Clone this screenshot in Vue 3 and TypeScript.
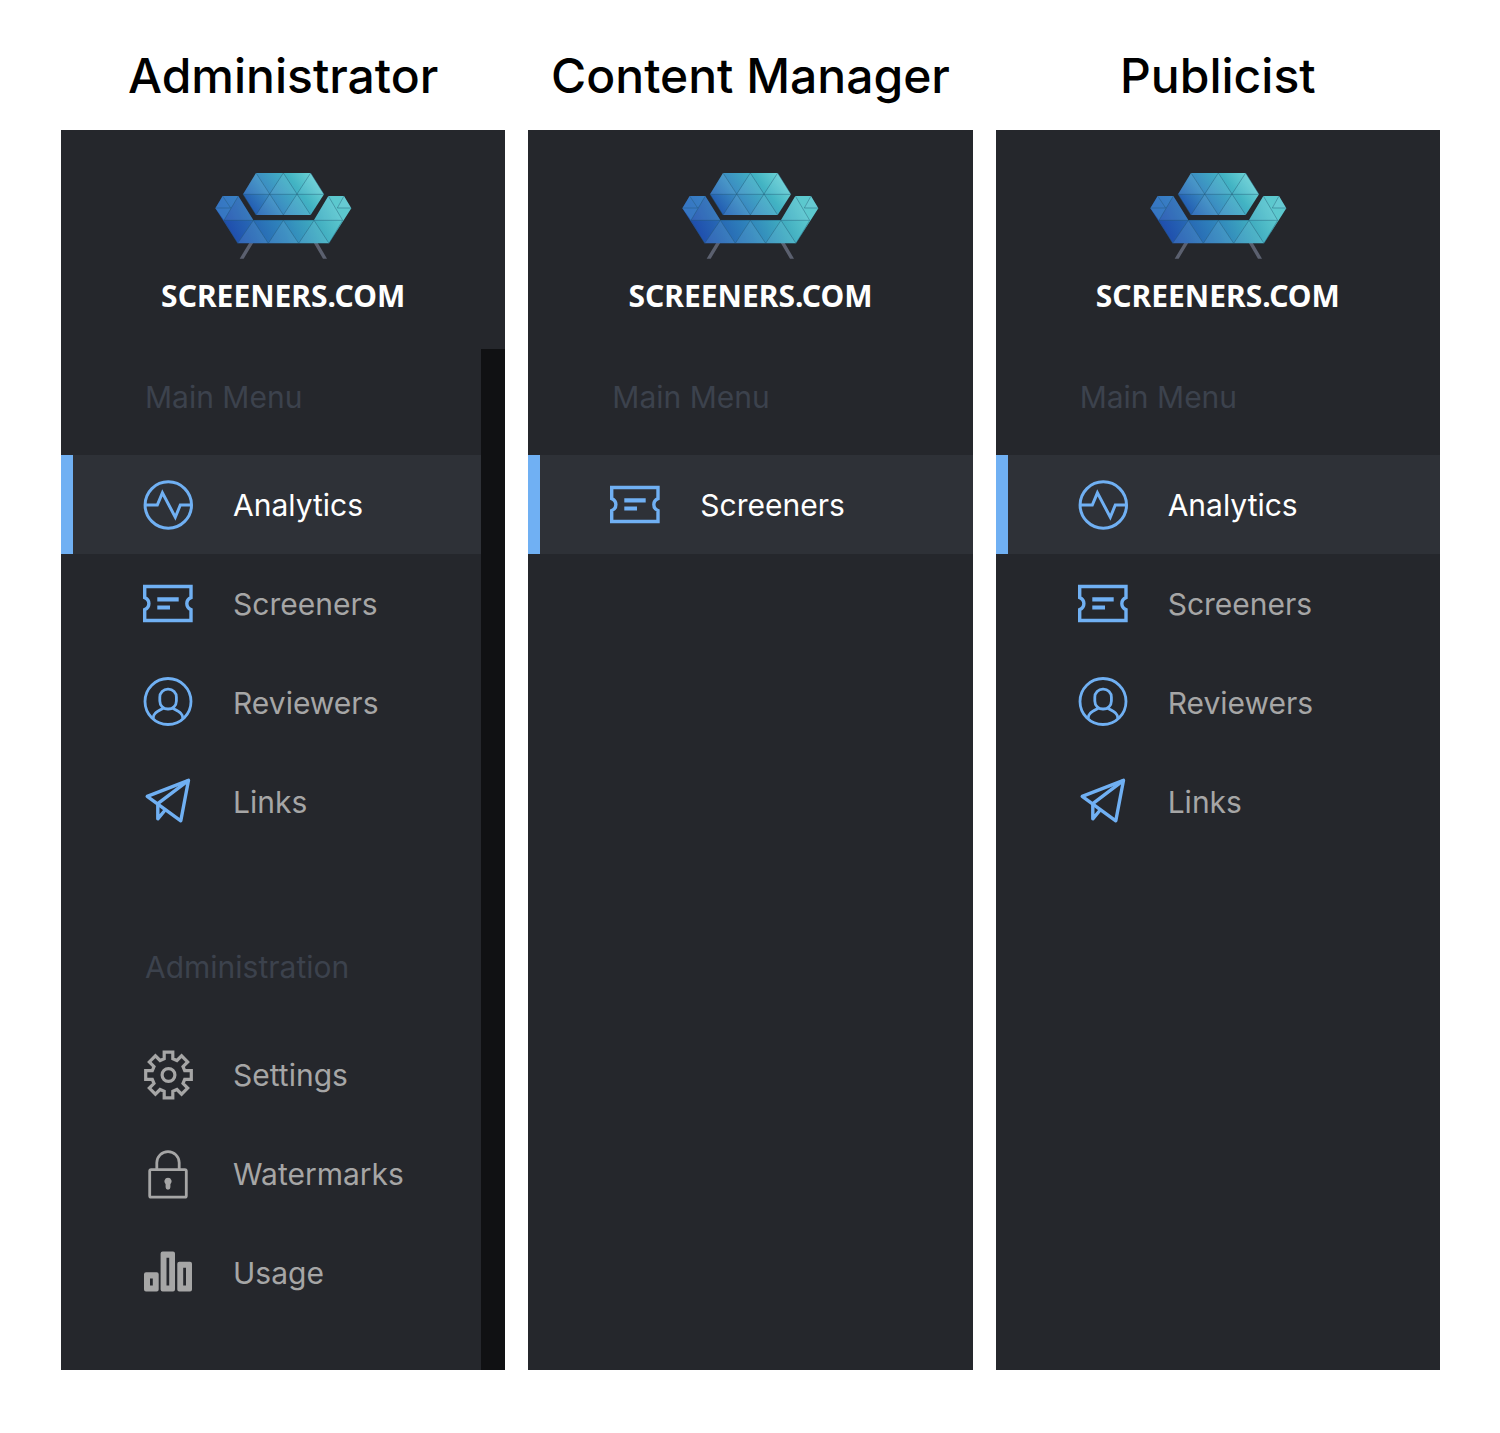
<script setup lang="ts">
type IconName = 'analytics' | 'ticket' | 'person' | 'plane' | 'gear' | 'lock' | 'bars'

interface MenuItem {
  label: string
  icon: IconName
  active?: boolean
}

interface MenuSection {
  title: string
  muted?: boolean
  items: MenuItem[]
}

interface Role {
  name: string
  scrollable?: boolean
  sections: MenuSection[]
}

const roles: Role[] = [
  {
    name: 'Administrator',
    scrollable: true,
    sections: [
      {
        title: 'Main Menu',
        items: [
          { label: 'Analytics', icon: 'analytics', active: true },
          { label: 'Screeners', icon: 'ticket' },
          { label: 'Reviewers', icon: 'person' },
          { label: 'Links', icon: 'plane' },
        ],
      },
      {
        title: 'Administration',
        muted: true,
        items: [
          { label: 'Settings', icon: 'gear' },
          { label: 'Watermarks', icon: 'lock' },
          { label: 'Usage', icon: 'bars' },
        ],
      },
    ],
  },
  {
    name: 'Content Manager',
    sections: [{ title: 'Main Menu', items: [{ label: 'Screeners', icon: 'ticket', active: true }] }],
  },
  {
    name: 'Publicist',
    sections: [
      {
        title: 'Main Menu',
        items: [
          { label: 'Analytics', icon: 'analytics', active: true },
          { label: 'Screeners', icon: 'ticket' },
          { label: 'Reviewers', icon: 'person' },
          { label: 'Links', icon: 'plane' },
        ],
      },
    ],
  },
]

// Outline of an eight-toothed gear around (25.5, 25)
function gearPoints(): string {
  const tooth = [[-4.3, -16.2], [-4.3, -22.8], [4.3, -22.8], [4.3, -16.2]]
  const points: string[] = []
  for (let i = 0; i < 8; i++) {
    const a = (i * Math.PI) / 4
    for (const [x, y] of tooth) {
      const px = 25.5 + x * Math.cos(a) - y * Math.sin(a)
      const py = 25 + x * Math.sin(a) + y * Math.cos(a)
      points.push(`${px.toFixed(2)},${py.toFixed(2)}`)
    }
  }
  return points.join(' ')
}
const gear = gearPoints()

const lightFacets = [
  '129,103 168,39 210,103',
  '210,103 250,39 291,103',
  '291,103 332,39 372,103',
  '168,165 210,103 250,165',
  '250,165 291,103 332,165',
  '72,181 115,108 160,181',
  '342,181 385,108 428,181',
  '113,250 160,181 205,250',
  '205,250 250,181 296,250',
  '296,250 342,181 387,250',
  '412,142 432,108 454,145',
]
</script>

<template>
  <main class="board">
    <section v-for="(role, r) in roles" :key="role.name" class="role">
      <h1 class="role-name">{{ role.name }}</h1>
      <div class="panel">
        <header class="brand">
          <svg class="sofa" viewBox="42 36 414 264" aria-hidden="true">
            <defs>
              <linearGradient :id="`back${r}`" gradientUnits="userSpaceOnUse" x1="160" y1="175" x2="330" y2="45">
                <stop offset="0" stop-color="#1f55b0" />
                <stop offset="0.42" stop-color="#3c90c2" />
                <stop offset="0.75" stop-color="#42b3c3" />
                <stop offset="1" stop-color="#66ced2" />
              </linearGradient>
              <linearGradient :id="`seat${r}`" gradientUnits="userSpaceOnUse" x1="110" y1="250" x2="400" y2="120">
                <stop offset="0" stop-color="#2050ae" />
                <stop offset="0.45" stop-color="#2f83bb" />
                <stop offset="0.75" stop-color="#3fabbf" />
                <stop offset="1" stop-color="#5cc8ce" />
              </linearGradient>
            </defs>
            <path d="M148 248h12l-29 48h-12zM341 248h12l28 48h-12z" fill="#5b606f" />
            <path d="M168 39H332L372 103 332 165H168L129 103z" :fill="`url(#back${r})`" />
            <path
              d="M68 108H115L160 180H342L385 108H432L454 145 387 250H113L46 145z"
              :fill="`url(#seat${r})`"
            />
            <path d="M68 108H115L72 181 46 145z" fill="#4b9bd6" fill-opacity="0.5" />
            <polygon v-for="f in lightFacets" :key="f" :points="f" fill="#a4dcf0" fill-opacity="0.14" />
            <path
              d="M129 103H372M168 39L250 165 332 39 372 103M129 103L168 165 250 39 332 165M72 181H428M46 144H92L68 108M115 108L72 181M454 144H412L432 108M385 108L428 181M72 181L113 250 160 181 205 250 250 181 296 250 342 181 387 250 428 181"
              fill="none"
              stroke="#20536f"
              stroke-opacity="0.4"
              stroke-width="3"
            />
          </svg>
          <span class="wordmark">SCREENERS.COM</span>
        </header>
        <div class="body">
          <nav class="menu" :aria-label="`${role.name} menu`">
            <div v-for="section in role.sections" :key="section.title" class="section">
              <h2 class="section-title">{{ section.title }}</h2>
              <ul class="items">
                <li v-for="item in section.items" :key="item.label">
                  <a href="#" class="item" :class="{ active: item.active, muted: section.muted }">
                    <svg class="icon" viewBox="0 0 50 50" aria-hidden="true">
                      <g v-if="item.icon === 'analytics'" class="line" stroke-width="3">
                        <circle cx="25.3" cy="25" r="23.2" />
                        <path d="M2.5 25H14.3L19.4 12.8 32.3 37.2 37.3 25H48.5" />
                      </g>
                      <g v-else-if="item.icon === 'ticket'" class="line">
                        <path
                          d="M1.7 7.5H48V18.6A6.4 6.4 0 0 0 48 30.6V41.5H1.7V30.6A6.4 6.4 0 0 0 1.7 18.6z"
                          stroke-width="3.4"
                        />
                        <path d="M14.3 20.3H35.7M14.3 28.5H27" stroke-width="4.2" />
                      </g>
                      <g v-else-if="item.icon === 'person'" class="line" stroke-width="2.8">
                        <circle cx="25" cy="23.5" r="23" />
                        <rect x="16.8" y="11.2" width="16.6" height="19.8" rx="8" />
                        <path d="M10.2 40.5C10 35.5 13.5 34 20.4 30.2M39.8 40.5C40 35.5 36.5 34 29.6 30.2" />
                      </g>
                      <g v-else-if="item.icon === 'plane'" class="line" stroke-width="3.4" stroke-linejoin="round">
                        <path d="M4.2 19.4L45.5 3.3 37.8 43.8z" />
                        <path d="M45.5 3.3L14.8 26.6V41.8L21.8 33.5" />
                      </g>
                      <g v-else-if="item.icon === 'gear'" class="line" stroke-width="3.2">
                        <polygon :points="gear" />
                        <circle cx="25.5" cy="25" r="6.4" />
                      </g>
                      <g v-else-if="item.icon === 'lock'" class="line" stroke-width="2.8">
                        <rect x="6.7" y="20.6" width="36.6" height="27.6" rx="1.5" />
                        <path d="M13.8 20.6V13.8A11.2 11.2 0 0 1 36.2 13.8V20.6" />
                        <path
                          d="M25 28.8a3.7 3.7 0 0 0-2.4 6.5V38.3a2.4 2.4 0 0 0 4.8 0V35.3A3.7 3.7 0 0 0 25 28.8z"
                          fill="currentColor"
                          stroke="none"
                        />
                      </g>
                      <path
                        v-else
                        fill="currentColor"
                        fill-rule="evenodd"
                        d="M3 24.2H13.7a2 2 0 0 1 2 2V41.5a2 2 0 0 1-2 2H3a2 2 0 0 1-2-2V26.2a2 2 0 0 1 2-2zM7 30.5V37.5H9.8V30.5zM19.6 3.5H30a2 2 0 0 1 2 2V41.5a2 2 0 0 1-2 2H19.6a2 2 0 0 1-2-2V5.5a2 2 0 0 1 2-2zM23.5 9.8V37.5H26.2V9.8zM36.3 13.8H47a2 2 0 0 1 2 2V41.5a2 2 0 0 1-2 2H36.3a2 2 0 0 1-2-2V15.8a2 2 0 0 1 2-2zM40.2 19.8V37.5H43V19.8z"
                      />
                    </svg>
                    <span>{{ item.label }}</span>
                  </a>
                </li>
              </ul>
            </div>
          </nav>
          <div v-if="role.scrollable" class="track" aria-hidden="true"></div>
        </div>
      </div>
    </section>
  </main>
</template>

<style>
body {
  background: #ffffff;
}
</style>

<style scoped>
.board {
  display: grid;
  grid-template-columns: repeat(3, 1fr);
  gap: 23px;
  padding: 46px 60px 63px 61px;
  font-family: Inter, 'Liberation Sans', sans-serif;
}

.role {
  display: flex;
  flex-direction: column;
}

.role-name {
  margin: 0 0 24px;
  font-size: 48px;
  line-height: 60px;
  font-weight: 500;
  text-align: center;
  color: #000000;
}

.panel {
  flex: 1;
  display: flex;
  flex-direction: column;
  background: #25272c;
}

.brand {
  display: flex;
  flex-direction: column;
  align-items: center;
  gap: 16px;
  padding: 42px 0 33px;
}

.sofa {
  width: 138px;
  height: 88px;
}

.wordmark {
  font-family: 'Noto Sans', sans-serif;
  font-size: 30px;
  line-height: 40px;
  font-weight: 700;
  color: #ffffff;
}

.body {
  flex: 1;
  display: flex;
}

.menu {
  flex: 1;
  display: flex;
  flex-direction: column;
  gap: 68px;
  padding-bottom: 48px;
}

.track {
  width: 24px;
  background: #101113;
}

.section-title {
  margin: 0;
  padding: 30px 0 40px 84px;
  font-size: 30px;
  line-height: 36px;
  font-weight: 400;
  color: #3c424d;
}

.items {
  margin: 0;
  padding: 0;
  list-style: none;
}

.item {
  display: flex;
  align-items: center;
  gap: 40px;
  height: 99px;
  padding-left: 70px;
  border-left: 12px solid transparent;
  font-size: 30px;
  line-height: 36px;
  color: #a6a6a6;
  text-decoration: none;
}

.item.active {
  background: #2e3137;
  border-left-color: #70b0f3;
  color: #ffffff;
}

.icon {
  width: 50px;
  height: 50px;
  overflow: visible;
  color: #70b0f3;
}

.muted .icon {
  color: #a6a6a6;
}

.line {
  fill: none;
  stroke: currentColor;
}
</style>
